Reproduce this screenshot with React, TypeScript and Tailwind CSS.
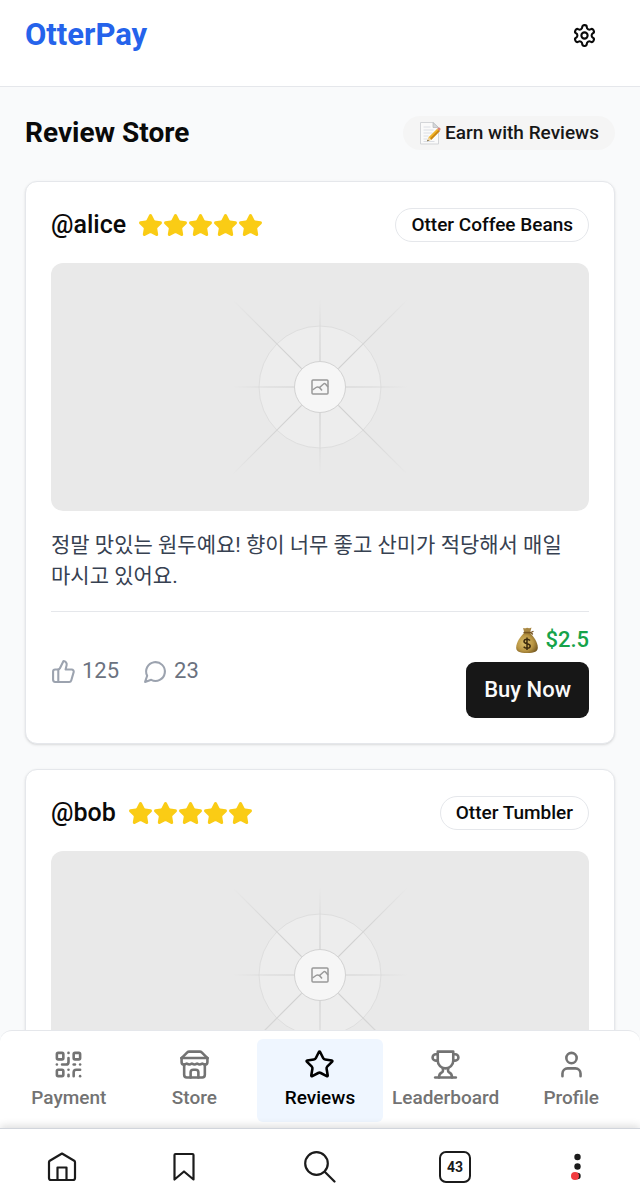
import React from 'react';
import { QrCode, Star, ThumbsUp, User } from 'lucide-react';

type Review = {
    user: string;
    product: string;
    rating: number;
    text?: string;
    likes?: number;
    comments?: number;
    reward?: string;
};

const REVIEWS: Review[] = [
    {
        user: '@alice',
        product: 'Otter Coffee Beans',
        rating: 5,
        text: '정말 맛있는 원두예요! 향이 너무 좋고 산미가 적당해서 매일 마시고 있어요.',
        likes: 125,
        comments: 23,
        reward: '$2.5',
    },
    { user: '@bob', product: 'Otter Tumbler', rating: 5 },
];

type IconProps = { className?: string; children?: React.ReactNode };

const LineIcon = ({ className, children }: IconProps) => (
    <svg
        viewBox="0 0 24 24"
        fill="none"
        stroke="currentColor"
        strokeWidth="2"
        strokeLinecap="round"
        strokeLinejoin="round"
        aria-hidden="true"
        className={className}
    >
        {children}
    </svg>
);

const GearIcon = ({ className }: IconProps) => (
    <LineIcon className={className}>
        <path d="M12.22 2h-.44a2 2 0 0 0-2 2v.18a2 2 0 0 1-1 1.73l-.43.25a2 2 0 0 1-2 0l-.15-.08a2 2 0 0 0-2.73.73l-.22.38a2 2 0 0 0 .73 2.73l.15.1a2 2 0 0 1 1 1.72v.51a2 2 0 0 1-1 1.74l-.15.09a2 2 0 0 0-.73 2.73l.22.38a2 2 0 0 0 2.73.73l.15-.08a2 2 0 0 1 2 0l.43.25a2 2 0 0 1 1 1.73V20a2 2 0 0 0 2 2h.44a2 2 0 0 0 2-2v-.18a2 2 0 0 1 1-1.73l.43-.25a2 2 0 0 1 2 0l.15.08a2 2 0 0 0 2.73-.73l.22-.39a2 2 0 0 0-.73-2.73l-.15-.08a2 2 0 0 1-1-1.74v-.5a2 2 0 0 1 1-1.74l.15-.09a2 2 0 0 0 .73-2.73l-.22-.38a2 2 0 0 0-2.73-.73l-.15.08a2 2 0 0 1-2 0l-.43-.25a2 2 0 0 1-1-1.73V4a2 2 0 0 0-2-2z" />
        <circle cx="12" cy="12" r="3" />
    </LineIcon>
);

const StoreIcon = ({ className }: IconProps) => (
    <LineIcon className={className}>
        <path d="m2 7 4.41-4.41A2 2 0 0 1 7.83 2h8.34a2 2 0 0 1 1.42.59L22 7" />
        <path d="M4 12v8a2 2 0 0 0 2 2h12a2 2 0 0 0 2-2v-8" />
        <path d="M15 22v-4a2 2 0 0 0-2-2h-2a2 2 0 0 0-2 2v4" />
        <path d="M2 7h20" />
        <path d="M22 7v3a2 2 0 0 1-2 2a2.7 2.7 0 0 1-1.59-.63.7.7 0 0 0-.82 0A2.7 2.7 0 0 1 16 12a2.7 2.7 0 0 1-1.59-.63.7.7 0 0 0-.82 0A2.7 2.7 0 0 1 12 12a2.7 2.7 0 0 1-1.59-.63.7.7 0 0 0-.82 0A2.7 2.7 0 0 1 8 12a2.7 2.7 0 0 1-1.59-.63.7.7 0 0 0-.82 0A2.7 2.7 0 0 1 4 12a2 2 0 0 1-2-2V7" />
    </LineIcon>
);

const TrophyIcon = ({ className }: IconProps) => (
    <LineIcon className={className}>
        <path d="M6 9H4.5a2.5 2.5 0 0 1 0-5H6" />
        <path d="M18 9h1.5a2.5 2.5 0 0 0 0-5H18" />
        <path d="M4 22h16" />
        <path d="M10 14.66V17c0 .55-.47.98-.97 1.21C7.85 18.75 7 20.24 7 22" />
        <path d="M14 14.66V17c0 .55.47.98.97 1.21C16.15 18.75 17 20.24 17 22" />
        <path d="M18 2H6v7a6 6 0 0 0 12 0V2Z" />
    </LineIcon>
);

const CommentIcon = ({ className }: IconProps) => (
    <LineIcon className={className}>
        <path d="M7.9 20A9 9 0 1 0 4 16.1L2 22Z" />
    </LineIcon>
);

const MemoIcon = () => (
    <svg viewBox="0 0 22 24" className="h-6 w-[22px]" aria-hidden="true">
        <path d="M1.5 1.5H14l5.5 5V23h-18z" fill="#fafafa" stroke="#d3d5d8" strokeWidth="1" />
        <path d="M14 1.5v5h5.5z" fill="#d5d7da" stroke="#b5b7ba" strokeWidth=".7" />
        <path d="M4.5 6h7M4.5 9h10M4.5 12h9M4.5 15h5M4.5 18h4M4.5 20.5h11" stroke="#d3d7de" strokeWidth=".8" />
        <path d="M8.2 20.3l1.6-4.2 8.4-8.3 2.5 2.5-8.4 8.4z" fill="#f0b429" />
        <path d="M11 17.5l8.5-8.4 1.2 1.2-8.4 8.4z" fill="#c98512" />
        <path d="M18.2 7.8l1.1-1.1q1.2-.5 2 .6.6.9 0 1.8l-.6 1.2z" fill="#d9837a" />
        <path d="M8.2 20.3l1.6-4.2 2.5 2.6z" fill="#efd5a4" />
        <path d="M8.2 20.3l.6-1.6 1 1z" fill="#333" />
    </svg>
);

const MoneyBagIcon = () => (
    <svg viewBox="0 0 24 28" className="h-7 w-6" aria-hidden="true">
        <defs>
            <radialGradient id="bag" cx=".4" cy=".5" r=".65">
                <stop offset="0" stopColor="#dbbf6b" />
                <stop offset=".6" stopColor="#b99543" />
                <stop offset="1" stopColor="#74571f" />
            </radialGradient>
        </defs>
        <path d="M8 2q2 .8 4-.2 2.5.9 4.5-.3L15 7H9.5z" fill="#a98843" />
        <path
            d="M9 7C5.5 10.5 1.2 16 1.2 21.5c0 4 3 5.5 10.8 5.5s10.8-1.5 10.8-5.5C22.8 16 18.5 10.5 15.2 7z"
            fill="url(#bag)"
        />
        <path d="M9 6.5h6.7l2.3-1M15.7 6.5l1.8 1.5" fill="none" stroke="#765320" strokeWidth="1.3" strokeLinecap="round" />
        <path
            d="M15 14.5q-1-1.3-3-1.3c-2 0-3 1-3 2.2 0 3 6.2 1.6 6.2 4.5 0 1.4-1.3 2.3-3.2 2.3q-2.2 0-3.3-1.5M12 11.5V24"
            fill="none"
            stroke="#3d2b0d"
            strokeWidth="1.5"
        />
    </svg>
);

const RAYS = [0, 45, 90, 135, 180, 225, 270, 315];

const ImagePlaceholder = ({ id }: { id: string }) => (
    <div className="flex h-[248px] items-center justify-center rounded-xl bg-[#e9e9e9]">
        <svg viewBox="-120 -120 240 240" className="size-60" role="img" aria-label="Review photo">
            <defs>
                <radialGradient id={`${id}-short`} gradientUnits="userSpaceOnUse" cx="0" cy="0" r="88">
                    <stop offset=".3" stopColor="#d2d2d2" />
                    <stop offset=".6" stopColor="#d8d8d8" />
                    <stop offset="1" stopColor="#d8d8d8" stopOpacity="0" />
                </radialGradient>
                <radialGradient id={`${id}-long`} gradientUnits="userSpaceOnUse" cx="0" cy="0" r="124">
                    <stop offset=".3" stopColor="#d0d0d0" />
                    <stop offset=".6" stopColor="#d6d6d6" />
                    <stop offset="1" stopColor="#d6d6d6" stopOpacity="0" />
                </radialGradient>
            </defs>
            <circle r="61" fill="#ededed" stroke="#dedede" />
            {RAYS.map((angle) => (
                <path
                    key={angle}
                    d={angle % 90 === 0 ? 'M26 -.6H88V.6H26z' : 'M26 -.6H124V.6H26z'}
                    transform={`rotate(${angle})`}
                    fill={angle % 90 === 0 ? `url(#${id}-short)` : `url(#${id}-long)`}
                />
            ))}
            <circle r="25.5" fill="#f6f6f6" stroke="#d2d2d2" />
            <g fill="none" stroke="#999" strokeWidth="1.5" strokeLinejoin="round">
                <rect x="-8" y="-7" width="16" height="14" rx="1" />
                <path d="M-7.5 3-4 .5Q-2.5-.5-.5.5L2 3.5" />
                <path d="M-1 1 3.5-3Q4.5-4 5.5-3L8 0" />
            </g>
        </svg>
    </div>
);

const ReviewCard = ({ review }: { review: Review }) => (
    <article className="rounded-xl border border-[#e5e7eb] bg-white p-[25px] shadow-sm">
        <div className="flex items-center justify-between">
            <div className="flex items-center gap-3">
                <span className="text-[25px] leading-9 font-medium">{review.user}</span>
                <div className="flex" role="img" aria-label={`${review.rating} stars`}>
                    {Array.from({ length: review.rating }, (_, i) => (
                        <Star key={i} className="size-[25px] fill-[#facc15] text-[#facc15]" />
                    ))}
                </div>
            </div>
            <span className="rounded-full border border-[#e5e7eb] px-[15px] py-1 text-[19px] leading-6 font-medium">
                {review.product}
            </span>
        </div>

        <div className="mt-5">
            <ImagePlaceholder id={`ray-${review.user.slice(1)}`} />
        </div>

        {review.text && (
            <>
                <p className="mt-[19px] text-[21px] leading-[31px] break-keep text-[#374151]">{review.text}</p>
                <div className="mt-[19px] flex items-center justify-between border-t border-[#e5e7eb] pt-3">
                    <div className="flex gap-6 text-[22px] leading-8 text-[#6b7280]">
                        <button className="flex items-center gap-[6px]">
                            <ThumbsUp className="size-[25px] text-[#9ca3af]" />
                            {review.likes}
                        </button>
                        <button className="flex items-center gap-[6px]">
                            <CommentIcon className="size-[25px] text-[#9ca3af]" />
                            {review.comments}
                        </button>
                    </div>
                    <div className="flex flex-col items-end gap-[6px]">
                        <span className="flex items-center gap-[6px] text-[22px] leading-8 font-medium text-[#16a34a]">
                            <MoneyBagIcon />
                            {review.reward}
                        </span>
                        <button className="rounded-[9px] bg-[#171717] px-[18px] py-3 text-[22px] leading-8 font-medium text-neutral-50">
                            Buy Now
                        </button>
                    </div>
                </div>
            </>
        )}
    </article>
);

const TABS = [
    { label: 'Payment', icon: QrCode },
    { label: 'Store', icon: StoreIcon },
    { label: 'Reviews', icon: Star },
    { label: 'Leaderboard', icon: TrophyIcon },
    { label: 'Profile', icon: User },
];

const TabBar = () => (
    <div className="bg-[#f9fafb]">
        <nav className="flex rounded-t-xl border-t border-[#e5e7eb] bg-white px-[6px] pt-2 pb-[6px]">
            {TABS.map(({ label, icon: Icon }) => (
                <button
                    key={label}
                    className={`flex flex-1 basis-0 flex-col items-center gap-[5px] rounded-md pt-[10px] pb-3 text-[19px] leading-[25px] font-medium ${
                        label === 'Reviews' ? 'bg-[#eff6ff] text-black' : 'text-[#737373]'
                    }`}
                >
                    <Icon className="size-[31px]" />
                    {label}
                </button>
            ))}
        </nav>
    </div>
);

const BrowserBar = () => (
    <div className="relative grid h-[76px] grid-cols-[123fr_122fr_150fr_120fr_125fr] place-items-center border-t border-gray-300 bg-white text-[#1b1b1b] shadow-[0_-2px_8px_rgba(0,0,0,0.14)]">
        <button aria-label="Home">
            <svg viewBox="0 0 32 32" className="size-8" fill="none" stroke="currentColor" strokeWidth="2.2" strokeLinejoin="round">
                <path d="M16 2.5 3.8 9.7Q3 10.2 3 11.2V27q0 2 2 2h22q2 0 2-2V11.2q0-1-.8-1.5z" />
                <path d="M11.5 29V16.5h9V29" />
            </svg>
        </button>
        <button aria-label="Bookmarks">
            <svg viewBox="0 0 32 32" className="size-8" fill="none" stroke="currentColor" strokeWidth="2.2" strokeLinejoin="round">
                <path d="M6.5 4q0-1 1-1h17q1 0 1 1v24.5L16 20.5l-9.5 8z" />
            </svg>
        </button>
        <button aria-label="Search">
            <svg viewBox="0 0 32 32" className="size-8" fill="none" stroke="currentColor" strokeWidth="2.2" strokeLinecap="round">
                <circle cx="12.5" cy="12.5" r="11.3" />
                <path d="M21 21l9.5 9.5" />
            </svg>
        </button>
        <button className="flex size-8 items-center justify-center rounded-[7px] border-2 border-current text-[14px] leading-4 font-bold">
            43
        </button>
        <button aria-label="Menu">
            <svg viewBox="0 0 32 32" className="size-8" fill="currentColor">
                <circle cx="15.5" cy="6" r="3.2" />
                <circle cx="15.5" cy="15.5" r="3.2" />
                <circle cx="15.5" cy="25" r="3.2" />
                <circle cx="13" cy="25" r="4" fill="#f13b3f" />
            </svg>
        </button>
    </div>
);

const App = () => {
    return (
        <div className="flex h-screen flex-col bg-[#f9fafb] font-[Roboto,'Noto_Sans_CJK_KR',sans-serif] text-neutral-950">
            <header className="flex shrink-0 items-center justify-between border-b border-[#e5e7eb] bg-white px-[25px] pt-1 pb-5">
                <h1 className="text-[31px] leading-[42px] font-bold text-[#2563eb]">OtterPay</h1>
                <button aria-label="Settings" className="flex size-[62px] items-center justify-center">
                    <GearIcon className="size-[25px]" />
                </button>
            </header>

            <main className="min-h-0 flex-1 overflow-hidden px-[25px] pt-6">
                <div className="mb-[27px] flex items-center justify-between">
                    <h2 className="text-[28px] leading-[43px] font-bold">Review Store</h2>
                    <span className="flex items-center gap-1 rounded-full bg-neutral-100 px-4 py-1 text-[19px] leading-[26px] font-medium text-neutral-900">
                        <MemoIcon />
                        Earn with Reviews
                    </span>
                </div>
                <div className="flex flex-col gap-[25px]">
                    {REVIEWS.map((review) => (
                        <ReviewCard key={review.user} review={review} />
                    ))}
                </div>
            </main>

            <TabBar />
            <BrowserBar />
        </div>
    );
};

export default App;
